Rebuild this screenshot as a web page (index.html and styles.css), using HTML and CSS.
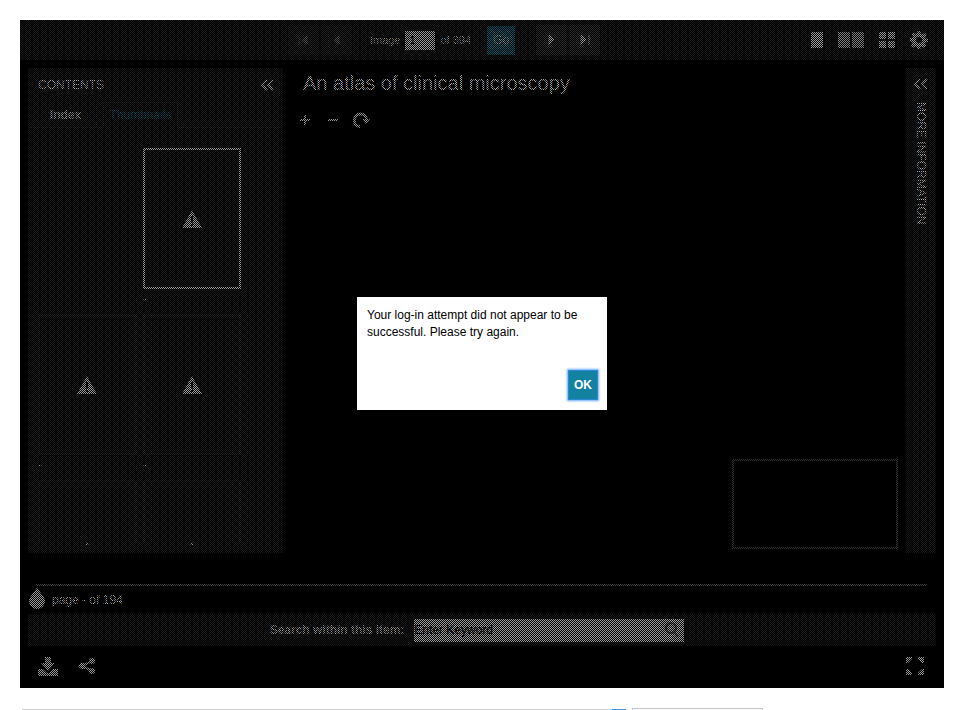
FILE: index.html
```html
<!DOCTYPE html>
<html lang="en">
<head>
<meta charset="utf-8">
<title>An atlas of clinical microscopy</title>
<link rel="stylesheet" href="styles.css">
</head>
<body>
<main class="viewer">
  <header class="toolbar">
    <nav class="paging" aria-label="Paging">
      <button class="nav nav-off" aria-label="First image"><svg width="12" height="12" viewBox="0 0 12 12"><path d="M2 1v10M10 2v8L5 6z"/></svg></button>
      <button class="nav nav-off" aria-label="Previous image"><svg width="12" height="12" viewBox="0 0 12 12"><path d="M8 2v8L3 6z"/></svg></button>
      <form class="jump">
        <label for="image">Image</label>
        <input id="image" type="text" value="1">
        <span>of 394</span>
        <button class="go" type="button">Go</button>
      </form>
      <button class="nav" aria-label="Next image"><svg width="12" height="12" viewBox="0 0 12 12"><path d="M4 1v10l5-5z"/></svg></button>
      <button class="nav" aria-label="Last image"><svg width="12" height="12" viewBox="0 0 12 12"><path d="M2 1v10l5-5zM10 1v10"/></svg></button>
    </nav>
    <div class="modes">
      <button class="icon" aria-label="One page"><svg width="12" height="16"><path d="M0 0h12v16H0z"/></svg></button>
      <button class="icon dim" aria-label="Two pages"><svg width="26" height="16"><path d="M0 0h12v16H0zM14 0h12v16H14z"/></svg></button>
      <button class="icon" aria-label="Gallery"><svg width="16" height="16"><path d="M0 0h7v7H0zM9 0h7v7H9zM0 9h7v7H0zM9 9h7v7H9z"/></svg></button>
      <button class="icon" aria-label="Settings"><svg width="18" height="18" viewBox="0 0 18 18"><path fill-rule="evenodd" d="M7.500 0h3l.5 2.500 1.500.7L14.700 1.700l2 2-1.400 2.200.5 1.600L18 8v3l-2.300.4-.7 1.500 1.300 2.100-2 2-2.200-1.300-1.400.6L10.300 18h-3l-.5-2.200-1.500-.6L3.200 16.500l-2-2 1.300-2.200-.6-1.400L0 10.300v-3l2.300-.5.7-1.500L1.500 3.200l2-2 2.200 1.500L7 2.300zM9 6a3 3 0 1 0 0 6 3 3 0 0 0 0-6z"/></svg></button>
    </div>
  </header>

  <div class="workspace">
    <aside class="contents">
      <div class="panel-head"><h2>CONTENTS</h2><button class="icon" aria-label="Collapse contents"><svg class="line" width="15" height="12" viewBox="0 0 15 12"><path d="M7 1L2 6l5 5M13 1L8 6l5 5"/></svg></button></div>
      <div class="tabs"><button class="tab">Index</button><button class="tab tab-on">Thumbnails</button></div>
      <div class="thumbs">
        <figure class="thumb first"><div class="frame frame-on"><svg class="warn" width="20" height="18"><use href="#warning"/></svg></div><figcaption>-</figcaption></figure>
        <figure class="thumb"><div class="frame"><svg class="warn" width="20" height="18"><use href="#warning"/></svg></div><figcaption>-</figcaption></figure>
        <figure class="thumb"><div class="frame"><svg class="warn" width="20" height="18"><use href="#warning"/></svg></div><figcaption>-</figcaption></figure>
        <figure class="thumb"><div class="frame"><svg class="warn" width="20" height="18"><use href="#warning"/></svg></div></figure>
        <figure class="thumb"><div class="frame"><svg class="warn" width="20" height="18"><use href="#warning"/></svg></div></figure>
      </div>
    </aside>
    <section class="stage">
      <h1>An atlas of clinical microscopy</h1>
      <div class="zoom">
        <button class="icon" aria-label="Zoom in"><svg class="line" width="18" height="18" viewBox="0 0 18 18"><path d="M4 9h10M9 4v10"/></svg></button>
        <button class="icon" aria-label="Zoom out"><svg class="line" width="18" height="18" viewBox="0 0 18 18"><path d="M4 9h10"/></svg></button>
        <button class="icon" aria-label="Rotate"><svg width="18" height="18" viewBox="0 0 18 18"><path d="M8 17C3 16.500 1 13 1 9.500 1 5 4.500 1.500 8.500 1.500c4 0 7 3 7.300 6.500H18l-4 5-4-5h3c-.5-2.200-2.200-3.600-4.500-3.600-2.700 0-4.700 2.200-4.700 5 0 2.400 1.500 4.500 4.200 4.900z"/></svg></button>
      </div>
      <div class="overview"></div>
    </section>
    <aside class="more">
      <button class="icon" aria-label="Expand information"><svg class="line" width="16" height="12" viewBox="0 0 16 12"><path d="M7 1L2 6l5 5M14 1L9 6l5 5"/></svg></button>
      <h2>MORE INFORMATION</h2>
    </aside>
  </div>

  <div class="track"></div>
  <div class="position"><svg width="16" height="26" viewBox="0 0 16 26"><path d="M8 0c1 4 8 9 8 14a8 8 0 0 1-16 0C0 9 7 4 8 0z"/></svg><span>page - of 194</span></div>
  <form class="search">
    <label for="keyword">Search within this item:</label>
    <span class="field"><input id="keyword" type="text" placeholder="Enter Keyword"><svg width="16" height="17" viewBox="0 0 16 17"><circle cx="7" cy="6" r="5"/><path d="M10 10l4 5"/></svg></span>
  </form>
  <footer class="actions">
    <button class="icon" aria-label="Download"><svg width="20" height="20" viewBox="0 0 20 20"><path d="M7 0h6v6h4l-7 8-7-8h4zM0 12h5l4 4h2l4-4h5v7H0z"/></svg></button>
    <button class="icon" aria-label="Share"><svg width="18" height="18" viewBox="0 0 18 18"><path d="M4 8l10-5M4 8l10 5" stroke="currentColor" stroke-width="2"/><path d="M0 8l3-3h4v6H3z"/><circle cx="14" cy="3" r="3"/><circle cx="14" cy="13" r="3"/></svg></button>
    <button class="icon full" aria-label="Full screen"><svg width="20" height="20" viewBox="0 0 20 20"><path d="M0 0h6v2L2 6H0zM12 0h6v6h-2l-4-4zM0 12h2l4 4v2H0zM16 12h2v6h-6v-2z"/></svg></button>
  </footer>
  <div class="screen"></div>
  <div class="dialog" role="alertdialog" aria-labelledby="message">
    <p id="message">Your log-in attempt did not appear to be successful. Please try again.</p>
    <button class="ok">OK</button>
  </div>
</main>
<div class="below">
  <div class="pick"><i></i></div>
  <div class="box"></div>
</div>
<svg width="0" height="0" class="defs"><symbol id="warning" viewBox="0 0 20 18"><path fill-rule="evenodd" d="M10 0l10 18H0zM9 6v5l.500 2h1l.5-2V6zM9 14v2h2v-2z"/></symbol></svg>
</body>
</html>
```
FILE: styles.css
```css
* { box-sizing: border-box; }
html { height: 100%; }
body {
  margin: 0;
  height: 100%;
  padding: 20px 16px 0 20px;
  overflow: hidden;
  display: flex;
  flex-direction: column;
  background: #fff;
  font: 12px/16px "Liberation Sans", Arial, sans-serif;
}
h1, h2, p, figure { margin: 0; }
button, input { font: inherit; border: 0; padding: 0; border-radius: 0; }
svg { display: block; fill: currentColor; }
.line { fill: none; stroke: currentColor; stroke-width: 2; }
.icon { background: none; color: inherit; }
.viewer {
  position: relative;
  flex: 1;
  min-height: 0;
  display: flex;
  flex-direction: column;
  background: #000;
  color: #999;
}
.toolbar {
  position: relative;
  height: 40px;
  flex: none;
  display: flex;
  align-items: center;
  justify-content: center;
  padding-right: 76px;
  background: #161616;
}
.paging { display: flex; align-items: center; gap: 4px; }
.jump { display: flex; align-items: center; margin: 0 17px 0 14px; font-size: 11px; }
.jump input {
  width: 30px;
  height: 19px;
  margin: 0 5px;
  padding-left: 4px;
  background: #999;
  color: #000;
}
.go { width: 28px; height: 29px; margin-left: 16px; background: #085568; color: #999; font-size: 12px; }
.nav {
  width: 30px;
  height: 30px;
  display: grid;
  place-items: center;
  background: #2a2a2a;
  color: #999;
}
.nav path { stroke: currentColor; }
.nav-off { background: #1f1f1f; color: #555; }
.modes {
  position: absolute;
  right: 16px;
  top: 0;
  height: 40px;
  display: flex;
  align-items: center;
  gap: 15px;
}
.modes .dim { color: #808080; }
.workspace { flex: 1; min-height: 0; display: flex; padding: 8px 8px 0; }
.contents {
  width: 255px;
  flex: none;
  display: flex;
  flex-direction: column;
  padding-bottom: 8px;
  background: #161616;
}
.panel-head {
  display: flex;
  align-items: center;
  justify-content: space-between;
  height: 34px;
  padding: 0 8px 0 10px;
}
h2 { font-size: 12px; font-weight: 400; color: #b0b0b0; }
.tabs { display: flex; height: 26px; border-bottom: 1px solid #2a2a2a; }
.tab { width: 75px; height: 26px; background: none; color: #999; font-weight: 700; }
.tab-on {
  border: 1px solid #2a2a2a;
  border-bottom-color: #161616;
  background: #161616;
  color: #085c70;
  font-weight: 400;
}
.thumbs {
  flex: 1;
  min-height: 0;
  overflow: hidden;
  display: grid;
  grid-template-columns: 98px 98px;
  grid-auto-rows: 166px;
  column-gap: 7px;
  padding: 20px 10px 0;
}
.first { grid-column: 2; }
.frame { height: 141px; display: grid; place-items: center; border: 2px solid #242424; }
.frame-on { border-color: #999; }
figcaption { height: 25px; font-size: 12px; line-height: 20px; }
.stage { position: relative; flex: 1; padding: 3px 20px; }
h1 { font-size: 20px; line-height: 24px; font-weight: 400; color: #b0b0b0; }
.zoom { display: flex; gap: 10px; margin-top: 16px; margin-left: -7px; }
.overview {
  position: absolute;
  right: 8px;
  bottom: 4px;
  width: 166px;
  height: 90px;
  border: 2px solid #363636;
}
.more {
  width: 30px;
  display: flex;
  flex-direction: column;
  align-items: center;
  padding-top: 10px;
  gap: 12px;
  background: #161616;
}
.more h2 { writing-mode: vertical-rl; }
.track { height: 2px; flex: none; margin: 31px 17px 0 16px; background: #404040; }
.position { display: flex; align-items: center; gap: 7px; height: 28px; flex: none; padding-left: 9px; }
.position span { color: #b0b0b0; }
.search {
  display: flex;
  align-items: center;
  justify-content: center;
  gap: 10px;
  height: 32px;
  flex: none;
  margin: 0 8px;
  padding-right: 10px;
  background: #161616;
  font-weight: 700;
}
.field { display: flex; align-items: center; width: 270px; height: 23px; padding-right: 4px; background: #999; }
.field input { flex: 1; min-width: 0; background: none; font-weight: 400; }
.field input::placeholder { color: #000; opacity: 1; }
.field svg { fill: none; stroke: #444; stroke-width: 2; }
.actions { display: flex; align-items: center; gap: 20px; height: 42px; flex: none; padding: 0 18px; }
.full { margin-left: auto; }
.screen {
  position: absolute;
  inset: 0;
  pointer-events: none;
  background: repeating-conic-gradient(#000 0 25%, transparent 0 50%) 0 0 / 2px 2px;
}
.dialog {
  position: absolute;
  left: calc(50% - 125px);
  top: calc(50% - 57px);
  width: 250px;
  height: 113px;
  display: flex;
  flex-direction: column;
  justify-content: space-between;
  padding: 10px 10px 11px;
  background: #fff;
  color: #000;
  line-height: 17px;
}
.ok {
  align-self: flex-end;
  width: 28px;
  height: 28px;
  background: #1282a0;
  color: #fff;
  font-weight: 700;
  box-shadow: 0 0 0 1px #2f86d8, 0 0 2px 2px #66aaff;
}
.below { display: flex; align-items: flex-end; gap: 6px; height: 22px; flex: none; padding-left: 2px; }
.pick { display: flex; justify-content: flex-end; width: 604px; height: 1px; background: #d0d0d0; }
.pick i { width: 14px; background: #4a98ec; }
.box { width: 131px; height: 2px; border: 1px solid #c4c4c4; border-bottom: 0; }
.defs { position: absolute; }
```
